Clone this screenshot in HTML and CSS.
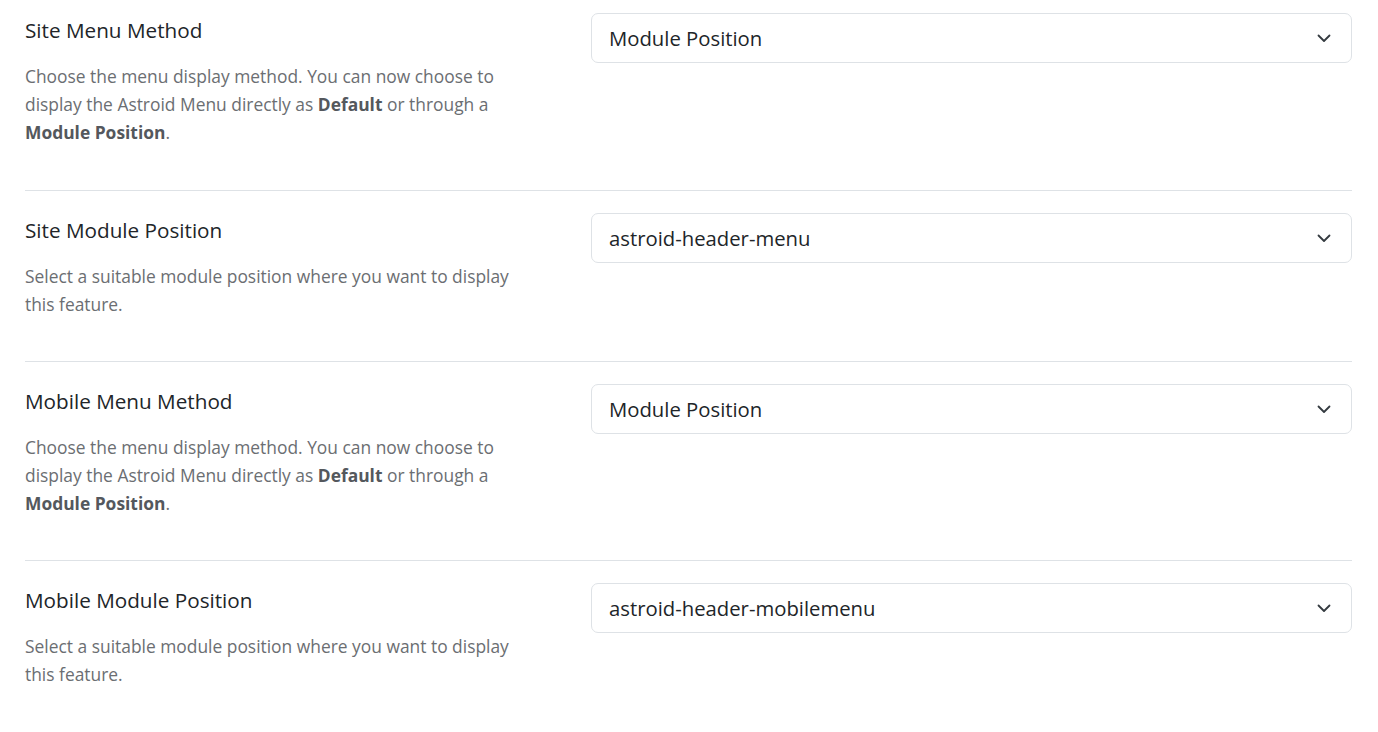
FILE: index.html
```html
<!DOCTYPE html>
<html lang="en">
<head>
<meta charset="utf-8">
<title>Menu settings</title>
<link rel="stylesheet" href="styles.css">
</head>
<body>
<div class="settings">
  <div class="row first">
    <div class="info">
      <div class="title">Site Menu Method</div>
      <p class="desc">Choose the menu display method. You can now choose to display the Astroid Menu directly as <b>Default</b> or through a <b>Module Position</b>.</p>
    </div>
    <div class="control">
      <div class="select"><span>Module Position</span><svg class="chev" viewBox="0 0 16 16" width="16" height="16"><path d="M2.5 5.5 8 11l5.5-5.5" fill="none" stroke="#343a40" stroke-width="1.8" stroke-linecap="round" stroke-linejoin="round"/></svg></div>
    </div>
  </div>
  <div class="row">
    <div class="info">
      <div class="title">Site Module Position</div>
      <p class="desc">Select a suitable module position where you want to display this feature.</p>
    </div>
    <div class="control">
      <div class="select"><span>astroid-header-menu</span><svg class="chev" viewBox="0 0 16 16" width="16" height="16"><path d="M2.5 5.5 8 11l5.5-5.5" fill="none" stroke="#343a40" stroke-width="1.8" stroke-linecap="round" stroke-linejoin="round"/></svg></div>
    </div>
  </div>
  <div class="row">
    <div class="info">
      <div class="title">Mobile Menu Method</div>
      <p class="desc">Choose the menu display method. You can now choose to display the Astroid Menu directly as <b>Default</b> or through a <b>Module Position</b>.</p>
    </div>
    <div class="control">
      <div class="select"><span>Module Position</span><svg class="chev" viewBox="0 0 16 16" width="16" height="16"><path d="M2.5 5.5 8 11l5.5-5.5" fill="none" stroke="#343a40" stroke-width="1.8" stroke-linecap="round" stroke-linejoin="round"/></svg></div>
    </div>
  </div>
  <div class="row last">
    <div class="info">
      <div class="title">Mobile Module Position</div>
      <p class="desc">Select a suitable module position where you want to display this feature.</p>
    </div>
    <div class="control">
      <div class="select"><span>astroid-header-mobilemenu</span><svg class="chev" viewBox="0 0 16 16" width="16" height="16"><path d="M2.5 5.5 8 11l5.5-5.5" fill="none" stroke="#343a40" stroke-width="1.8" stroke-linecap="round" stroke-linejoin="round"/></svg></div>
    </div>
  </div>
</div>
</body>
</html>
```

FILE: styles.css
```css
html, body {
  margin: 0;
  padding: 0;
  background: #ffffff;
}
body {
  font-family: "Open Sans", "Noto Sans", sans-serif;
  color: #212529;
}
.settings {
  width: 1327px;
  margin-left: 25px;
}
.row {
  display: grid;
  grid-template-columns: 566px 1fr;
  padding: 22px 0 43px;
  border-bottom: 1px solid #dee2e6;
}
.row.first {
  padding: 13px 0 44px;
}
.row.last {
  border-bottom: none;
}
.info {
  padding-top: 5px;
  width: 515px;
}
.title {
  font-size: 20.7px;
  line-height: 24px;
  color: #212529;
}
.desc {
  margin: 20px 0 0;
  font-size: 17.4px;
  line-height: 28px;
  color: #6b6e72;
}
.desc b {
  color: #54585d;
  font-weight: 700;
}
.select {
  height: 48px;
  border: 1px solid #dee2e6;
  border-radius: 7px;
  display: flex;
  align-items: center;
  justify-content: space-between;
  padding: 0 19px 0 17px;
  font-size: 20.3px;
  color: #212529;
}
.chev {
  display: block;
}
```
